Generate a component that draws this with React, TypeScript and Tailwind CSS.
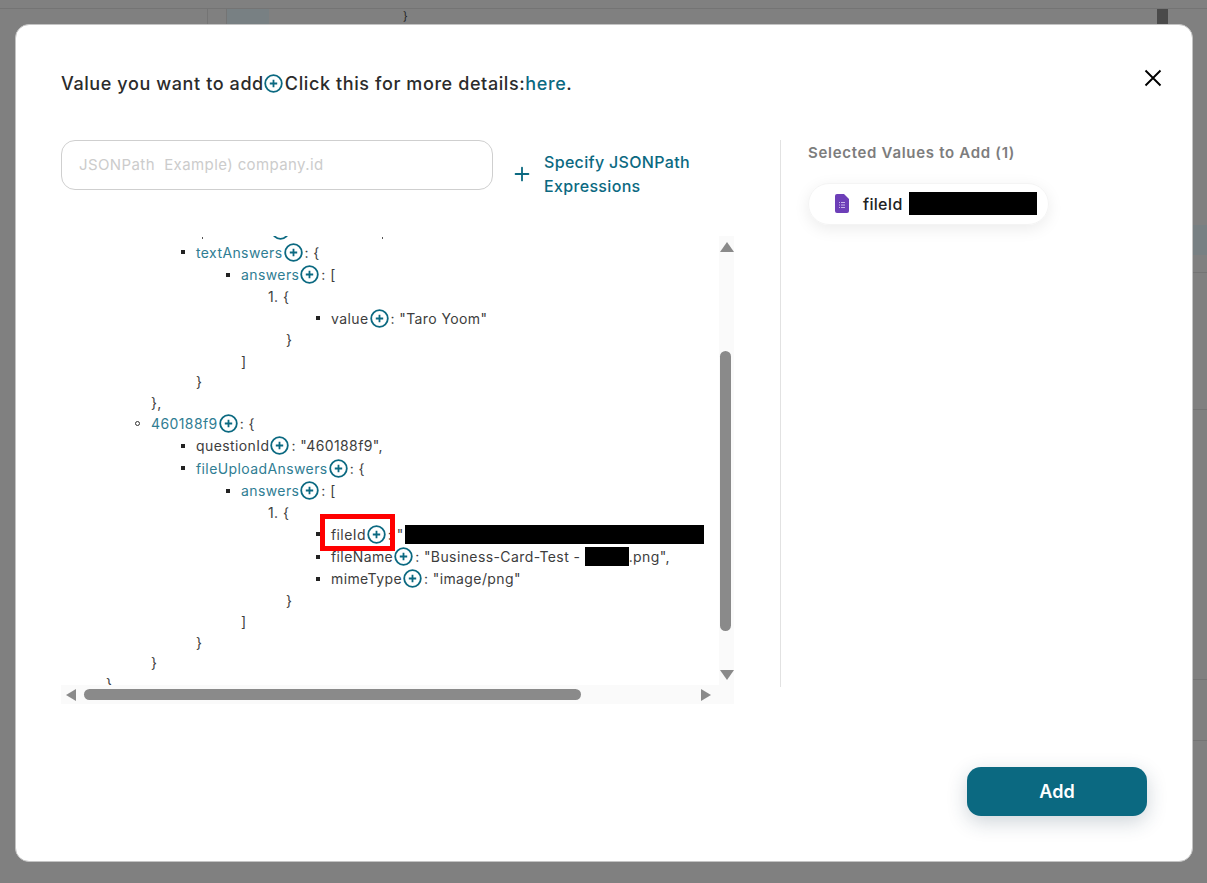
import { Plus } from "lucide-react";

const font = "font-['Inter','Noto_Sans',sans-serif]";

function AddIcon({ size = 19 }: { size?: number }) {
  return (
    <svg width={size} height={size} viewBox="0 0 19 19" fill="none" className="shrink-0">
      <circle cx="9.5" cy="9.5" r="8.3" stroke="#0b6981" strokeWidth="1.8" />
      <path d="M9.5 5.8v7.4M5.8 9.5h7.4" stroke="#0b6981" strokeWidth="1.8" />
    </svg>
  );
}

function Key({ name, link }: { name: string; link?: boolean }) {
  return (
    <>
      <span className={link ? "text-[#2f7d93]" : ""}>{name}</span>
      <span className="ml-px mr-[2px]">
        <AddIcon />
      </span>
    </>
  );
}

function Row({
  indent,
  bullet,
  h,
  children,
}: {
  indent: string;
  bullet?: "square" | "circle";
  h: string;
  children: React.ReactNode;
}) {
  return (
    <div className={`relative flex shrink-0 items-center whitespace-pre ${indent} ${h}`}>
      {bullet === "square" && <span className="absolute -ml-[15px] h-1 w-1 bg-[#222]" />}
      {bullet === "circle" && (
        <span className="absolute -ml-[16px] h-[5px] w-[5px] rounded-full border border-[#333]" />
      )}
      {children}
    </div>
  );
}

function Tree() {
  return (
    <div className="flex h-[460px] w-[658px] flex-col overflow-hidden text-[14px] tracking-[0.4px] text-[#3d3d3d]">
      {/* row scrolled away, only its lower edge still shows */}
      <div className="flex h-[15.5px] shrink-0 items-end pb-px pl-[141px]">
        <span className="mb-px h-[2px] w-px bg-[#555]" />
        <span className="ml-[68px] h-[4px] w-[19px] overflow-hidden">
          <span className="-mt-[15px] block">
            <AddIcon />
          </span>
        </span>
        <span className="mb-px ml-[92px] h-[2px] w-px bg-[#555]" />
      </div>
      <Row indent="pl-[135px]" bullet="square" h="h-[23px]">
        <Key name="textAnswers" link />: {"{"}
      </Row>
      <Row indent="pl-[180px]" bullet="square" h="h-[22px]">
        <Key name="answers" link />: [
      </Row>
      <Row indent="pl-[207px]" h="h-[21.5px]">
        1. {"{"}
      </Row>
      <Row indent="pl-[270px]" bullet="square" h="h-[22px]">
        <Key name="value" />: "Taro Yoom"
      </Row>
      <Row indent="pl-[225px]" h="h-[21.5px]">{"}"}</Row>
      <Row indent="pl-[180px]" h="h-[21px]">]</Row>
      <Row indent="pl-[135px]" h="h-[20.5px]">{"}"}</Row>
      <Row indent="pl-[90px]" h="h-[20.5px]">{"},"}</Row>
      <Row indent="pl-[90px]" bullet="circle" h="h-[22px]">
        <Key name="460188f9" link />: {"{"}
      </Row>
      <Row indent="pl-[135px]" bullet="square" h="h-[22.5px]">
        <Key name="questionId" />: "460188f9",
      </Row>
      <Row indent="pl-[135px]" bullet="square" h="h-[22.5px]">
        <Key name="fileUploadAnswers" link />: {"{"}
      </Row>
      <Row indent="pl-[180px]" bullet="square" h="h-[22px]">
        <Key name="answers" link />: [
      </Row>
      <Row indent="pl-[207px]" h="h-[21.5px]">
        1. {"{"}
      </Row>
      <Row indent="pl-[270px]" bullet="square" h="h-[22.5px]">
        <Key name="fileId" />: "
        <span className="ml-px h-[19px] w-[299px] shrink-0 bg-black" />
        {/* red highlight sits over the key */}
        <span className="absolute left-[259px] top-[-9px] z-10 h-[37px] w-[75px] border-[5px] border-[#f00]" />
      </Row>
      <Row indent="pl-[270px]" bullet="square" h="h-[22.5px]">
        <Key name="fileName" />: "Business-Card-Test -{" "}
        <span className="h-[19px] w-[44px] shrink-0 bg-black" />
        .png",
      </Row>
      <Row indent="pl-[270px]" bullet="square" h="h-[21.5px]">
        <Key name="mimeType" />: "image/png"
      </Row>
      <Row indent="pl-[225px]" h="h-[21.5px]">{"}"}</Row>
      <Row indent="pl-[180px]" h="h-[21px]">]</Row>
      <Row indent="pl-[135px]" h="h-[20.5px]">{"}"}</Row>
      <Row indent="pl-[90px]" h="h-[20.5px]">{"}"}</Row>
      <Row indent="pl-[45px]" h="h-[20px]">{"}"}</Row>
    </div>
  );
}

function VerticalScrollbar() {
  return (
    <div className="mt-[11px] h-[449px] w-[15px] shrink-0 bg-[#fafafa] pl-px">
      <div className="mt-[6px] h-0 w-0 border-x-[7px] border-b-[10px] border-x-transparent border-b-[#8a8a8a]" />
      <div className="mt-[99px] h-[280px] w-[11px] rounded-full bg-[#8a8a8a]" />
      <div className="mt-[39px] h-0 w-0 border-x-[7px] border-t-[10px] border-x-transparent border-t-[#8a8a8a]" />
    </div>
  );
}

function HorizontalScrollbar() {
  return (
    <div className="flex h-[19px] w-[673px] items-center bg-[#fafafa] pl-[5px]">
      <div className="h-0 w-0 border-y-[6px] border-r-[10px] border-y-transparent border-r-[#8a8a8a]" />
      <div className="ml-[8px] h-[11px] w-[497px] rounded-full bg-[#8a8a8a]" />
      <div className="ml-[120px] h-0 w-0 border-y-[6px] border-l-[10px] border-y-transparent border-l-[#8a8a8a]" />
    </div>
  );
}

function BackdropTop() {
  return (
    <div className="flex h-[24px] flex-col">
      <div className="h-[9px] border-b border-[#747474]" />
      <div className="flex h-[15px]">
        <div className="w-[208px] border-r border-[#747474]" />
        <div className="ml-[18px] w-[43px] border-l border-[#747474] bg-[#788083]" />
        <div className="ml-[134px] pt-[1px] text-[11px] leading-[12px] text-[#222]">{"}"}</div>
        <div className="ml-auto mr-[39px] w-[11px] bg-[#4a4a4a]" />
      </div>
    </div>
  );
}

function BackdropRight() {
  return (
    <div className="flex w-[14px] flex-col">
      <div className="mt-[201px] h-[30px] bg-[#788083]" />
      <div className="h-[18px] border-b border-[#747474]" />
      <div className="h-[137px] border-b border-[#747474]" />
      <div className="h-[270px] border-b border-[#747474]" />
      <div className="h-[61px] border-b border-[#747474]" />
    </div>
  );
}

export default function App() {
  return (
    <div className={`h-[883px] w-[1207px] overflow-hidden bg-[#808080] ${font}`}>
      <BackdropTop />
      <div className="flex">
        <div className="ml-[15px] flex h-[838px] w-[1178px] flex-col rounded-[14px] border border-[#c4c4c4] bg-white px-[45px] pt-[45px]">
          <div className="flex justify-between">
            <div className="mt-px flex h-[24px] items-center text-[18px] font-medium tracking-[0.6px] text-[#2b2b2b]">
              Value you want to add
              <span className="mr-[2px]">
                <AddIcon />
              </span>
              Click this for more details:<span className="text-[#0b6981]">here</span>.
            </div>
            <svg width="18" height="18" viewBox="0 0 18 18" className="-mr-[15px] -mt-px shrink-0">
              <path d="M1.500 1.500l15 15M16.500 1.500l-15 15" stroke="#000" strokeWidth="1.900" fill="none" />
            </svg>
          </div>

          <div className="mt-[45px] flex">
            <div className="w-[719px] shrink-0">
              <div className="flex w-[673px] items-start">
                <div className="flex h-[50px] w-[432px] items-center rounded-[14px] border border-[#cfcfcf] pl-[17px] text-[15px] tracking-[0.4px] text-[#cccccc]">
                  JSONPath&nbsp; Example) company.id
                </div>
                <Plus className="ml-[18px] mt-[23px] h-[22px] w-[22px] text-[#0b6981]" strokeWidth={2} />
                <div className="ml-[11px] mt-[10px] text-[16px] font-medium leading-[24px] tracking-[0.33px] text-[#0b6981]">
                  Specify JSONPath
                  <br />
                  Expressions
                </div>
              </div>
              <div className="mt-[27px] flex w-[673px]">
                <Tree />
                <VerticalScrollbar />
              </div>
              <HorizontalScrollbar />
            </div>

            <div className="h-[547px] w-px shrink-0 bg-[#e2e2e2]" />

            <div className="pl-[27px]">
              <div className="mt-[2px] text-[15px] font-semibold tracking-[0.7px] text-[#7d7d7d]">
                Selected Values to Add (1)
              </div>
              <div className="mt-[18px] flex h-[42px] w-[241px] items-center rounded-full border border-[#f4f4f4] pl-[26px] shadow-[0_4px_16px_rgba(0,0,0,0.08)]">
                <svg width="14" height="19" viewBox="0 0 14 19" className="shrink-0">
                  <path d="M2 0h7l5 5v12a2 2 0 0 1-2 2H2a2 2 0 0 1-2-2V2a2 2 0 0 1 2-2z" fill="#6d3fb8" />
                  <path d="M4 8h1v1H4zM6 8h4v1H6zM4 10.500h1v1H4zM6 10.500h4v1H6zM4 13h1v1H4zM6 13h4v1H6z" fill="#c9b5ea" />
                </svg>
                <span className="ml-[14px] text-[16px] font-medium tracking-[0.3px] text-[#222]">fileId</span>
                <span className="ml-[6px] h-[23px] w-[128px] bg-black" />
              </div>
            </div>
          </div>

          <div className="mt-[63px] flex justify-end">
            <button className="h-[49px] w-[180px] rounded-[14px] bg-[#0b6981] text-[18px] font-semibold text-white shadow-[0_6px_20px_rgba(30,60,80,0.22)]">
              Add
            </button>
          </div>
        </div>
        <BackdropRight />
      </div>
    </div>
  );
}
